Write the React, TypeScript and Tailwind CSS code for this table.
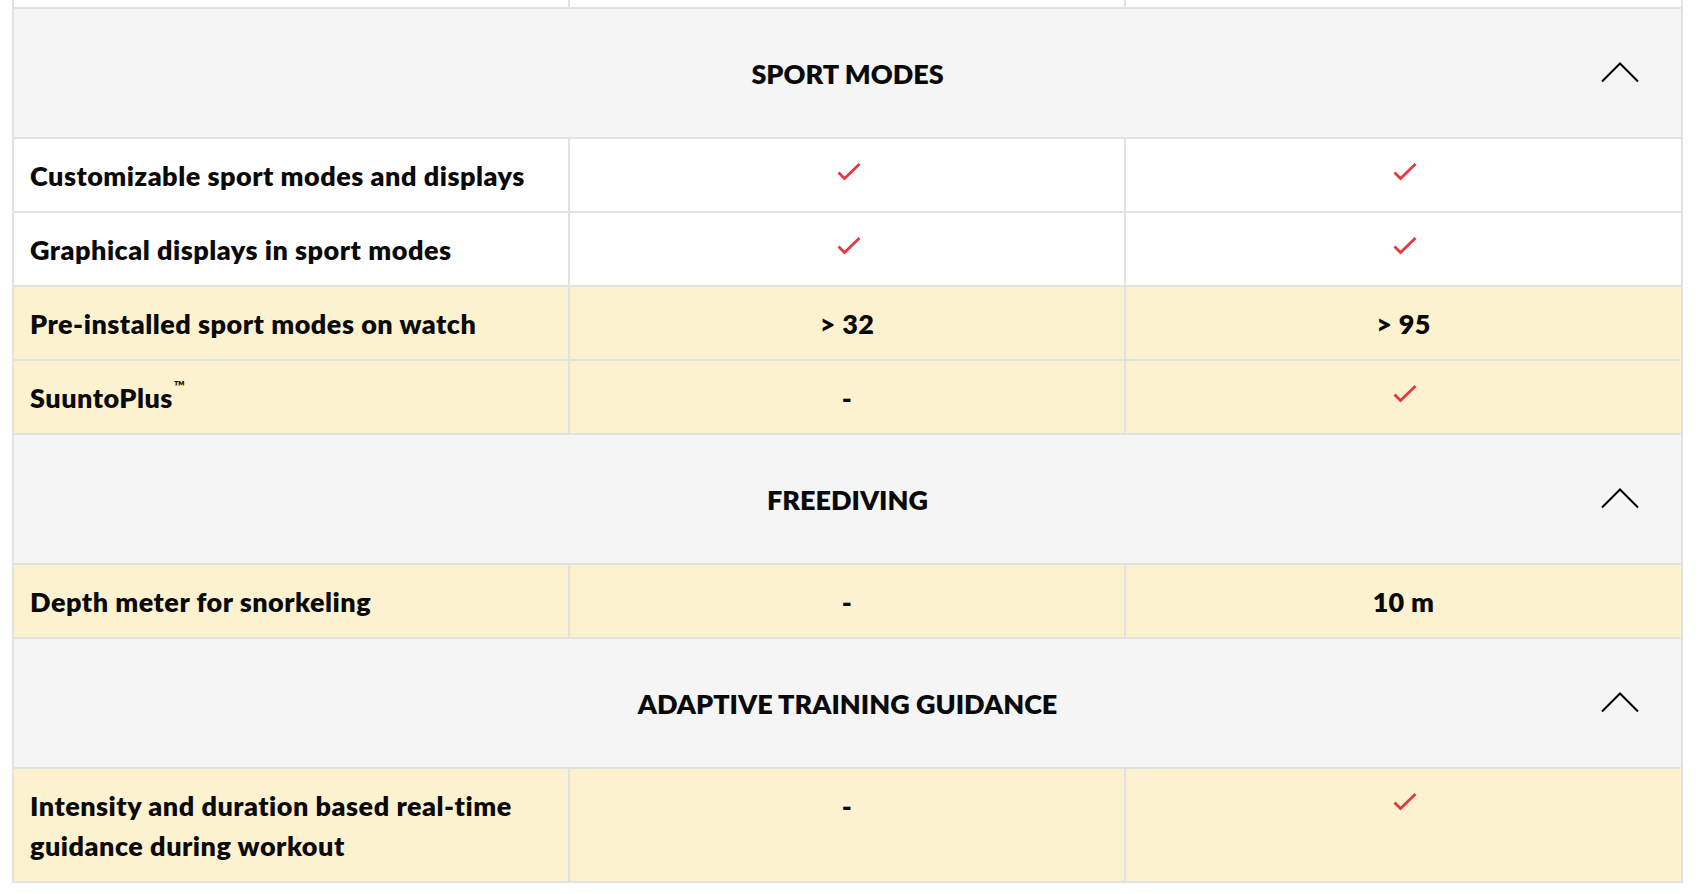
import React from "react";

type Val = "check" | string;
type Row = { label: React.ReactNode; a: Val; b: Val; hl?: boolean };
type Section = { title: string; rows: Row[] };

const sections: Section[] = [
  {
    title: "SPORT MODES",
    rows: [
      { label: "Customizable sport modes and displays", a: "check", b: "check" },
      { label: "Graphical displays in sport modes", a: "check", b: "check" },
      { label: "Pre-installed sport modes on watch", a: "> 32", b: "> 95", hl: true },
      {
        label: (
          <>
            SuuntoPlus<sup className="text-[15px] font-bold tracking-normal align-[9px] ml-[1px]">™</sup>
          </>
        ),
        a: "-",
        b: "check",
        hl: true,
      },
    ],
  },
  {
    title: "FREEDIVING",
    rows: [{ label: "Depth meter for snorkeling", a: "-", b: "10 m", hl: true }],
  },
  {
    title: "ADAPTIVE TRAINING GUIDANCE",
    rows: [
      {
        label: (
          <>
            Intensity and duration based real-time
            <br />
            guidance during workout
          </>
        ),
        a: "-",
        b: "check",
        hl: true,
      },
    ],
  },
];

function Check() {
  return (
    <svg width="24" height="18" viewBox="0 0 24 18" fill="none" className="block">
      <polyline
        points="1.5,9.5 7.5,15.5 22.5,1"
        stroke="#dd3c43"
        strokeWidth="2.8"
        strokeLinejoin="miter"
      />
    </svg>
  );
}

function ChevronUp() {
  return (
    <svg width="38" height="21" viewBox="0 0 38 21" fill="none" className="block">
      <polyline points="1,19.5 19,1.5 37,19.5" stroke="#000" strokeWidth="2" />
    </svg>
  );
}

function ValueCell({ v, hl }: { v: Val; hl?: boolean }) {
  return (
    <div className={`${hl ? "bg-[#fdf2d0]" : "bg-white"} px-4 py-4`}>
      {v === "check" ? (
        <div className="h-[40px] flex justify-center items-start pt-[8px] pl-[3px]">
          <Check />
        </div>
      ) : (
        <div className="h-[40px] leading-[40px] text-center tracking-[0.3px] pt-[1px]">{v}</div>
      )}
    </div>
  );
}

export default function App() {
  return (
    <div
      className="w-[1700px] h-[894px] bg-white overflow-hidden text-[#0a0a0a] font-extrabold text-[27px]"
      style={{ fontFamily: "Lato, 'Noto Sans', Arial, sans-serif" }}
    >
      <div className="ml-[12px] w-[1671px] bg-[#e2e2e2] px-[2px] pb-[2px] grid grid-cols-[554px_554px_555px] gap-[2px]">
        <div className="bg-white h-[7px]" />
        <div className="bg-white h-[7px]" />
        <div className="bg-white h-[7px]" />
        {sections.map((s) => (
          <React.Fragment key={s.title}>
            <div className="col-span-3 bg-[#f5f5f5] h-[128px] grid grid-cols-[1fr_auto_1fr] items-center">
              <div />
              <div className="tracking-[0px] pt-[2px]">{s.title}</div>
              <div className="justify-self-end mr-[42px] mt-[-2px]">
                <ChevronUp />
              </div>
            </div>
            {s.rows.map((r, i) => (
              <React.Fragment key={i}>
                <div
                  className={`${r.hl ? "bg-[#fdf2d0]" : "bg-white"} px-4 pt-[17px] pb-[15px] leading-[40px] tracking-[0.5px]`}
                >
                  {r.label}
                </div>
                <ValueCell v={r.a} hl={r.hl} />
                <ValueCell v={r.b} hl={r.hl} />
              </React.Fragment>
            ))}
          </React.Fragment>
        ))}
      </div>
    </div>
  );
}
